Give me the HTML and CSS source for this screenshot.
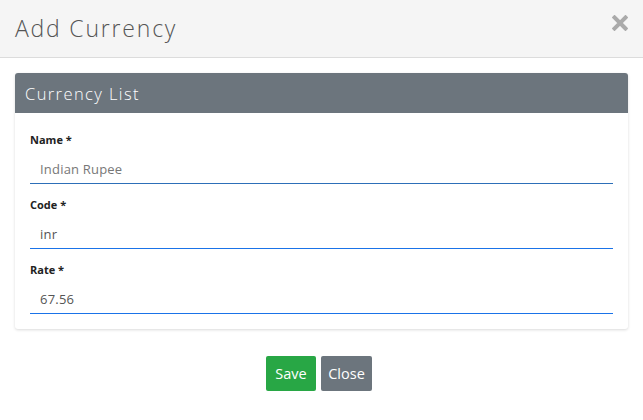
FILE: index.html
```html
<!DOCTYPE html>
<html>
<head>
<meta charset="utf-8">
<link rel="stylesheet" href="styles.css">
</head>
<body>
<div class="modal">
  <div class="modal-header">
    <h1 class="modal-title">Add Currency</h1>
    <svg class="close" width="16" height="16" viewBox="0 0 16 16" aria-label="close">
      <path d="M2.5 2.5 L13.5 13.5 M13.5 2.5 L2.5 13.5" stroke="#aaa" stroke-width="4" stroke-linecap="square"/>
    </svg>
  </div>
  <div class="modal-body">
    <div class="card">
      <div class="card-header">Currency List</div>
      <div class="card-body">
        <div class="field">
          <label class="label">Name *</label>
          <div class="input input-dark-line placeholder">Indian Rupee</div>
        </div>
        <div class="field">
          <label class="label">Code *</label>
          <div class="input">inr</div>
        </div>
        <div class="field">
          <label class="label">Rate *</label>
          <div class="input">67.56</div>
        </div>
      </div>
    </div>
    <div class="actions">
      <button class="btn btn-save">Save</button>
      <button class="btn btn-close">Close</button>
    </div>
  </div>
</div>
</body>
</html>
```
FILE: styles.css
```css
* { box-sizing: border-box; }
html, body { margin: 0; padding: 0; background: #fff; }
body { font-family: "Open Sans", sans-serif; width: 643px; height: 420px; overflow: hidden; }
.modal { width: 643px; }
.modal-header {
  height: 58px;
  background: #f5f5f5;
  border-bottom: 1px solid #dcdcdc;
  display: flex;
  align-items: center;
  justify-content: space-between;
  padding: 0 15px 2px 15px;
}
.modal-title {
  margin: 0;
  font-weight: 300;
  font-size: 23px;
  color: #555;
  letter-spacing: 1.8px;
}
.close { margin-top: -9px; margin-right: 0; }
.modal-body { padding: 15px 15px 0 15px; }
.card {
  border-radius: 3px;
  box-shadow: 0 1px 3px rgba(0,0,0,0.15);
  background: #fff;
}
.card-header {
  background: #6c757d;
  color: #fff;
  height: 40px;
  display: flex;
  align-items: center;
  padding: 0 10px 0;
  font-weight: 300;
  font-size: 16.5px;
  letter-spacing: 1.4px;
  border-radius: 3px 3px 0 0;
}
.card-body { padding: 20px 15px 15px 15px; display: flex; flex-direction: column; gap: 14px; }
.field { display: flex; flex-direction: column; }
.label { font-weight: 700; font-size: 11px; color: #222; height: 14px; line-height: 14px; }
.input {
  height: 37px;
  padding: 13px 10px 0;
  font-size: 13px;
  color: #555;
  letter-spacing: 0.2px;
  border-bottom: 1px solid #1a73e8;
}
.input-dark-line { border-bottom-color: #2d6fb8; }
.placeholder { color: #777; }
.actions { display: flex; justify-content: center; gap: 5px; margin-top: 27px; padding-right: 5px; }
.btn {
  border: none;
  border-radius: 2px;
  height: 35px;
  color: #fff;
  font-family: "Open Sans", sans-serif;
  font-size: 14.5px;
  padding: 0 5px;
}
.btn-save { background: #28a745; width: 50px; }
.btn-close { background: #6c757d; width: 51px; }
```
